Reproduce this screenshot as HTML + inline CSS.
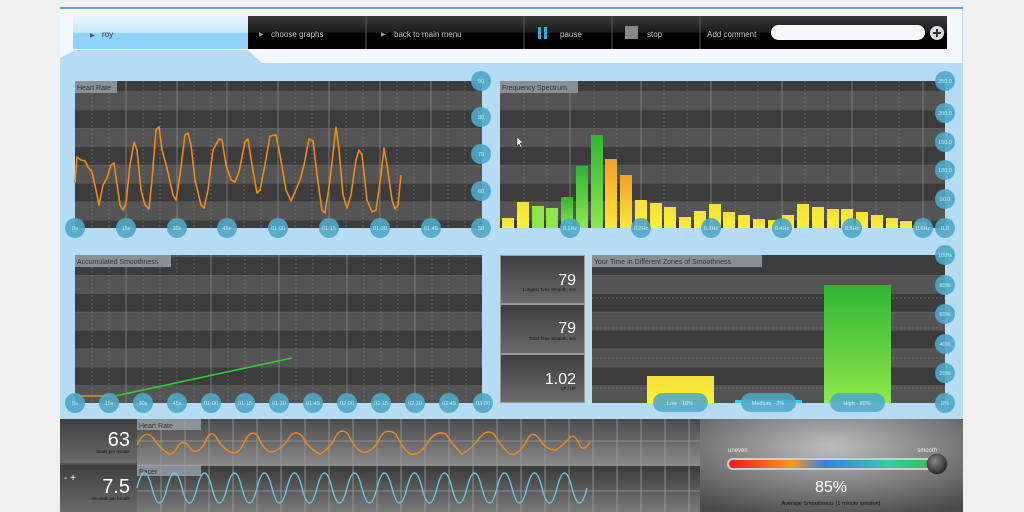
<!DOCTYPE html>
<html><head><meta charset="utf-8"><style>
html,body{margin:0;padding:0;width:1024px;height:512px;overflow:hidden;background:#f0f0f0}
svg{display:block;font-family:"Liberation Sans",sans-serif}
</style></head><body>
<svg width="1024" height="512" viewBox="0 0 1024 512" xmlns="http://www.w3.org/2000/svg">
<defs>
<linearGradient id="tab" x1="0" y1="0" x2="0" y2="1"><stop offset="0" stop-color="#e8f5fd"/><stop offset="0.5" stop-color="#c8e9fb"/><stop offset="0.52" stop-color="#8fd3fb"/><stop offset="1" stop-color="#8fd3fb"/></linearGradient>
<linearGradient id="nav" x1="0" y1="0" x2="0" y2="1"><stop offset="0" stop-color="#3a3a3a"/><stop offset="0.5" stop-color="#1a1a1a"/><stop offset="0.52" stop-color="#000"/><stop offset="1" stop-color="#000"/></linearGradient>
<linearGradient id="yel" x1="0" y1="0" x2="0" y2="1"><stop offset="0" stop-color="#f5e03a"/><stop offset="1" stop-color="#fff238"/></linearGradient>
<linearGradient id="grn" x1="0" y1="0" x2="0" y2="1"><stop offset="0" stop-color="#2db534"/><stop offset="1" stop-color="#8ee84a"/></linearGradient>
<linearGradient id="org" x1="0" y1="0" x2="0" y2="1"><stop offset="0" stop-color="#f0a028"/><stop offset="1" stop-color="#fde838"/></linearGradient>
<linearGradient id="stat" x1="0" y1="0" x2="0" y2="1"><stop offset="0" stop-color="#3e3e3e"/><stop offset="1" stop-color="#6a6a6a"/></linearGradient>
<linearGradient id="bot" x1="0" y1="0" x2="0" y2="1"><stop offset="0" stop-color="#4a4a4a"/><stop offset="0.5" stop-color="#8a8a8a"/><stop offset="0.51" stop-color="#3a3a3a"/><stop offset="1" stop-color="#7a7a7a"/></linearGradient>
<radialGradient id="smp" cx="0.5" cy="0.3" r="0.8"><stop offset="0" stop-color="#bdbdbd"/><stop offset="1" stop-color="#4a4a4a"/></radialGradient>
<linearGradient id="rain" x1="0" y1="0" x2="1" y2="0"><stop offset="0" stop-color="#f01818"/><stop offset="0.3" stop-color="#f59a20"/><stop offset="0.45" stop-color="#3a7fe0"/><stop offset="0.75" stop-color="#3ac8a8"/><stop offset="1" stop-color="#30c040"/></linearGradient>
<radialGradient id="knob" cx="0.4" cy="0.35" r="0.7"><stop offset="0" stop-color="#888"/><stop offset="1" stop-color="#222"/></radialGradient>
<pattern id="bands" x="0" y="0" width="10" height="36.75" patternUnits="userSpaceOnUse"><rect width="10" height="18" fill="#3c3c3c"/><rect y="18" width="10" height="18.75" fill="#545454"/></pattern>
</defs>

<!-- app bg -->
<rect x="60" y="7" width="903" height="505" fill="#b5dcf3"/>
<rect x="60" y="7" width="903" height="2" fill="#6a9ee8"/>
<polygon points="60,9 962,9 962,63 262,63 248,50 75,50 60,58" fill="#f3f9fd"/>
<rect x="73" y="16" width="175" height="33" fill="url(#tab)"/>
<text x="90" y="37" font-size="6" fill="#555">▶</text>
<text x="102" y="37" font-size="8" fill="#333">roy</text>
<rect x="248" y="16" width="699" height="33" fill="url(#nav)"/>
<g stroke="#555" stroke-width="1"><line x1="366" y1="16" x2="366" y2="49"/><line x1="524" y1="16" x2="524" y2="49"/><line x1="612" y1="16" x2="612" y2="49"/><line x1="700" y1="16" x2="700" y2="49"/></g>
<g font-size="8" fill="#ccc">
<text x="259" y="36" font-size="6" fill="#999">▶</text><text x="271" y="37">choose graphs</text>
<text x="381" y="36" font-size="6" fill="#999">▶</text><text x="394" y="37">back to main menu</text>
<text x="560" y="37">pause</text><text x="647" y="37">stop</text><text x="707" y="37">Add comment</text>
</g>
<rect x="538" y="27" width="3" height="12" fill="#1fb4d8"/><rect x="544" y="27" width="3" height="12" fill="#1fb4d8"/>
<rect x="625" y="26" width="13" height="13" fill="#888"/>
<rect x="771" y="25" width="154" height="15" rx="7.5" fill="#f4f8fb"/>
<circle cx="937" cy="33" r="7" fill="#ddd"/><path d="M933,33h8M937,29v8" stroke="#333" stroke-width="2"/>

<!-- Heart rate chart -->
<g>
<rect x="75" y="81" width="407" height="147" fill="url(#bands)"/>
<g stroke="#777" stroke-width="0.7" stroke-dasharray="2,2">
<line x1="92" y1="81" x2="92" y2="228"/><line x1="109" y1="81" x2="109" y2="228"/><line x1="143" y1="81" x2="143" y2="228"/><line x1="160" y1="81" x2="160" y2="228"/><line x1="194" y1="81" x2="194" y2="228"/><line x1="211" y1="81" x2="211" y2="228"/><line x1="244" y1="81" x2="244" y2="228"/><line x1="261" y1="81" x2="261" y2="228"/><line x1="295" y1="81" x2="295" y2="228"/><line x1="312" y1="81" x2="312" y2="228"/><line x1="346" y1="81" x2="346" y2="228"/><line x1="363" y1="81" x2="363" y2="228"/><line x1="397" y1="81" x2="397" y2="228"/><line x1="414" y1="81" x2="414" y2="228"/><line x1="448" y1="81" x2="448" y2="228"/><line x1="465" y1="81" x2="465" y2="228"/>
</g>
<g stroke="#888" stroke-width="0.8"><line x1="126" y1="81" x2="126" y2="228"/><line x1="177" y1="81" x2="177" y2="228"/><line x1="227" y1="81" x2="227" y2="228"/><line x1="278" y1="81" x2="278" y2="228"/><line x1="329" y1="81" x2="329" y2="228"/><line x1="380" y1="81" x2="380" y2="228"/><line x1="431" y1="81" x2="431" y2="228"/></g>
<rect x="75" y="81" width="42" height="12" fill="#8a8f93"/><text x="77" y="90" font-size="7" fill="#333">Heart Rate</text>
<path d="M75,183 L77,157 L81,160 L85,161 L88,167 L92,172 L96,190 L99,205 L103,185 L107,178 L111,165 L114,163 L116,177 L120,205 L123,210 L126,203 L130,165 L134,142 L137,150 L141,190 L145,205 L149,209 L152,180 L156,130 L159,127 L162,150 L167,168 L173,195 L176,200 L180,175 L185,135 L188,133 L191,145 L195,180 L201,205 L204,208 L208,190 L213,150 L219,139 L222,140 L226,165 L231,180 L235,182 L239,172 L245,142 L248,139 L252,165 L257,193 L260,190 L265,165 L270,136 L276,135 L280,155 L286,190 L291,201 L295,192 L300,180 L304,165 L309,139 L313,141 L317,175 L322,210 L325,213 L330,180 L336,127 L339,150 L343,195 L347,208 L351,195 L356,160 L359,150 L362,155 L367,200 L372,212 L376,210 L381,175 L384,148 L387,165 L392,200 L395,209 L398,205 L401,175" fill="none" stroke="#f08a14" stroke-width="1.6" stroke-linejoin="round"/>
</g>

<!-- Freq chart -->
<g>
<rect x="500" y="81" width="445" height="147" fill="url(#bands)"/>
<g stroke="#777" stroke-width="0.7" stroke-dasharray="2,2">
<line x1="524" y1="81" x2="524" y2="228"/><line x1="547" y1="81" x2="547" y2="228"/><line x1="594" y1="81" x2="594" y2="228"/><line x1="617" y1="81" x2="617" y2="228"/><line x1="664" y1="81" x2="664" y2="228"/><line x1="687" y1="81" x2="687" y2="228"/><line x1="735" y1="81" x2="735" y2="228"/><line x1="758" y1="81" x2="758" y2="228"/><line x1="805" y1="81" x2="805" y2="228"/><line x1="828" y1="81" x2="828" y2="228"/><line x1="876" y1="81" x2="876" y2="228"/><line x1="899" y1="81" x2="899" y2="228"/>
</g>
<g stroke="#888" stroke-width="0.8"><line x1="570" y1="81" x2="570" y2="228"/><line x1="641" y1="81" x2="641" y2="228"/><line x1="711" y1="81" x2="711" y2="228"/><line x1="782" y1="81" x2="782" y2="228"/><line x1="852" y1="81" x2="852" y2="228"/><line x1="923" y1="81" x2="923" y2="228"/></g>
<rect x="500" y="81" width="78" height="12" fill="#8a8f93"/><text x="502" y="90" font-size="7" fill="#333">Frequency Spectrum</text>
<g>
<rect x="502" y="218" width="12" height="10" fill="url(#yel)"/>
<rect x="517" y="202" width="12" height="26" fill="url(#yel)"/>
<rect x="532" y="206" width="12" height="22" fill="#8ee84a"/>
<rect x="546" y="208" width="12" height="20" fill="#8ee84a"/>
<rect x="561" y="197" width="12" height="31" fill="url(#grn)"/>
<rect x="576" y="166" width="12" height="62" fill="url(#grn)"/>
<rect x="591" y="135" width="12" height="93" fill="url(#grn)"/>
<rect x="605" y="159" width="12" height="69" fill="url(#org)"/>
<rect x="620" y="175" width="12" height="53" fill="url(#org)"/>
<rect x="635" y="200" width="12" height="28" fill="url(#yel)"/>
<rect x="650" y="203" width="12" height="25" fill="url(#yel)"/>
<rect x="664" y="207" width="12" height="21" fill="url(#yel)"/>
<rect x="679" y="217" width="12" height="11" fill="url(#yel)"/>
<rect x="694" y="211" width="12" height="17" fill="url(#yel)"/>
<rect x="709" y="204" width="12" height="24" fill="url(#yel)"/>
<rect x="723" y="212" width="12" height="16" fill="url(#yel)"/>
<rect x="738" y="215" width="12" height="13" fill="url(#yel)"/>
<rect x="753" y="219" width="12" height="9" fill="url(#yel)"/>
<rect x="768" y="220" width="12" height="8" fill="url(#yel)"/>
<rect x="782" y="215" width="12" height="13" fill="url(#yel)"/>
<rect x="797" y="204" width="12" height="24" fill="url(#yel)"/>
<rect x="812" y="207" width="12" height="21" fill="url(#yel)"/>
<rect x="827" y="209" width="12" height="19" fill="url(#yel)"/>
<rect x="841" y="209" width="12" height="19" fill="url(#yel)"/>
<rect x="856" y="212" width="12" height="16" fill="url(#yel)"/>
<rect x="871" y="215" width="12" height="13" fill="url(#yel)"/>
<rect x="886" y="218" width="12" height="10" fill="url(#yel)"/>
<rect x="900" y="221" width="12" height="7" fill="url(#yel)"/>
<rect x="915" y="222" width="12" height="6" fill="url(#yel)"/>
</g>
<path d="M517,137 l0,9 l2,-2 l2,4 l1,-1 l-2,-4 l3,0 z" fill="#fff" stroke="#000" stroke-width="0.4"/>
</g>

<!-- Accumulated -->
<g>
<rect x="75" y="255" width="407" height="148" fill="url(#bands)"/>
<g stroke="#777" stroke-width="0.7" stroke-dasharray="2,2">
<line x1="92" y1="255" x2="92" y2="403"/><line x1="109" y1="255" x2="109" y2="403"/><line x1="143" y1="255" x2="143" y2="403"/><line x1="160" y1="255" x2="160" y2="403"/><line x1="177" y1="255" x2="177" y2="403"/><line x1="194" y1="255" x2="194" y2="403"/><line x1="228" y1="255" x2="228" y2="403"/><line x1="245" y1="255" x2="245" y2="403"/><line x1="262" y1="255" x2="262" y2="403"/><line x1="296" y1="255" x2="296" y2="403"/><line x1="313" y1="255" x2="313" y2="403"/><line x1="330" y1="255" x2="330" y2="403"/><line x1="364" y1="255" x2="364" y2="403"/><line x1="381" y1="255" x2="381" y2="403"/><line x1="398" y1="255" x2="398" y2="403"/><line x1="432" y1="255" x2="432" y2="403"/><line x1="449" y1="255" x2="449" y2="403"/><line x1="466" y1="255" x2="466" y2="403"/>
</g>
<g stroke="#888" stroke-width="0.8"><line x1="126" y1="255" x2="126" y2="403"/><line x1="211" y1="255" x2="211" y2="403"/><line x1="279" y1="255" x2="279" y2="403"/><line x1="347" y1="255" x2="347" y2="403"/><line x1="415" y1="255" x2="415" y2="403"/></g>
<rect x="75" y="255" width="96" height="12" fill="#8a8f93"/><text x="77" y="264" font-size="7" fill="#333">Accumulated Smoothness</text>
<line x1="77" y1="396" x2="112" y2="396" stroke="#f08a14" stroke-width="1.6"/>
<line x1="115" y1="396" x2="292" y2="358" stroke="#2bd02b" stroke-width="1.6"/>
</g>

<!-- Stats -->
<g>
<rect x="500" y="255" width="85" height="148" fill="#999"/>
<rect x="501" y="256" width="83" height="47" fill="url(#stat)"/>
<rect x="501" y="305" width="83" height="48" fill="url(#stat)"/>
<rect x="501" y="355" width="83" height="47" fill="url(#stat)"/>
<g fill="#fff" font-size="16" text-anchor="end"><text x="576" y="285">79</text><text x="576" y="333">79</text><text x="576" y="384">1.02</text></g>
<g fill="#111" font-size="4.5" text-anchor="end"><text x="576" y="291">Longest Time Smooth, sec</text><text x="576" y="340">Total Time Smooth, sec</text><text x="576" y="390">LF / HF</text></g>
</g>

<!-- Zones -->
<g>
<rect x="592" y="255" width="353" height="148" fill="url(#bands)"/>
<rect x="592" y="255" width="353" height="14" fill="#3c3c3c"/>
<g stroke="#777" stroke-width="0.7" stroke-dasharray="2,2"><line x1="592" y1="298" x2="945" y2="298"/><line x1="592" y1="328" x2="945" y2="328"/><line x1="592" y1="358" x2="945" y2="358"/><line x1="592" y1="388" x2="945" y2="388"/></g>
<rect x="592" y="255" width="170" height="12" fill="#8a8f93"/><text x="594" y="264" font-size="7" fill="#333">Your Time in Different Zones of Smoothness</text>
<rect x="647" y="376" width="67" height="27" fill="url(#yel)"/>
<rect x="735" y="400" width="67" height="3" fill="#2bd8f0"/>
<rect x="824" y="285" width="67" height="118" fill="url(#grn)"/>
<g fill="#4ea9c8" opacity="0.85"><rect x="653" y="393" width="55" height="19" rx="9.5"/><rect x="741" y="393" width="55" height="19" rx="9.5"/><rect x="830" y="393" width="55" height="19" rx="9.5"/></g>
<g fill="#d8eef6" font-size="5.5" text-anchor="middle"><text x="680" y="405">Low - 18%</text><text x="768" y="405">Medium - 2%</text><text x="857" y="405">High - 80%</text></g>
</g>

<!-- Axis circles -->
<g fill="#4ea9c8" opacity="0.9">
<circle cx="481" cy="81" r="10"/><circle cx="481" cy="117" r="10"/><circle cx="481" cy="154" r="10"/><circle cx="481" cy="191" r="10"/><circle cx="481" cy="228" r="10"/>
<circle cx="75" cy="228" r="10"/><circle cx="126" cy="228" r="10"/><circle cx="177" cy="228" r="10"/><circle cx="227" cy="228" r="10"/><circle cx="278" cy="228" r="10"/><circle cx="329" cy="228" r="10"/><circle cx="380" cy="228" r="10"/><circle cx="431" cy="228" r="10"/>
<circle cx="945" cy="81" r="10"/><circle cx="945" cy="113" r="10"/><circle cx="945" cy="142" r="10"/><circle cx="945" cy="170" r="10"/><circle cx="945" cy="199" r="10"/><circle cx="945" cy="228" r="10"/>
<circle cx="570" cy="228" r="10"/><circle cx="641" cy="228" r="10"/><circle cx="711" cy="228" r="10"/><circle cx="782" cy="228" r="10"/><circle cx="852" cy="228" r="10"/><circle cx="923" cy="228" r="10"/>
<circle cx="75" cy="403" r="10"/><circle cx="109" cy="403" r="10"/><circle cx="143" cy="403" r="10"/><circle cx="177" cy="403" r="10"/><circle cx="211" cy="403" r="10"/><circle cx="245" cy="403" r="10"/><circle cx="279" cy="403" r="10"/><circle cx="313" cy="403" r="10"/><circle cx="347" cy="403" r="10"/><circle cx="381" cy="403" r="10"/><circle cx="415" cy="403" r="10"/><circle cx="449" cy="403" r="10"/><circle cx="483" cy="403" r="10"/>
<circle cx="945" cy="255" r="10"/><circle cx="945" cy="285" r="10"/><circle cx="945" cy="314" r="10"/><circle cx="945" cy="344" r="10"/><circle cx="945" cy="373" r="10"/><circle cx="945" cy="403" r="10"/>
</g>
<g fill="#d0e8f2" font-size="5.5" text-anchor="middle">
<text x="481" y="83">90</text><text x="481" y="119">80</text><text x="481" y="156">70</text><text x="481" y="193">60</text><text x="481" y="230">50</text>
<text x="75" y="230">0s</text><text x="126" y="230">15s</text><text x="177" y="230">30s</text><text x="227" y="230">45s</text><text x="278" y="230">01:00</text><text x="329" y="230">01:15</text><text x="380" y="230">01:30</text><text x="431" y="230">01:45</text>
<text x="945" y="83">250.0</text><text x="945" y="115">200.0</text><text x="945" y="144">150.0</text><text x="945" y="172">100.0</text><text x="945" y="201">50.0</text><text x="945" y="230">0.0</text>
<text x="570" y="230">0.1Hz</text><text x="641" y="230">0.2Hz</text><text x="711" y="230">0.3Hz</text><text x="782" y="230">0.4Hz</text><text x="852" y="230">0.5Hz</text><text x="923" y="230">0.6Hz</text>
<text x="75" y="405">0s</text><text x="109" y="405">15s</text><text x="143" y="405">30s</text><text x="177" y="405">45s</text><text x="211" y="405">01:00</text><text x="245" y="405">01:15</text><text x="279" y="405">01:30</text><text x="313" y="405">01:45</text><text x="347" y="405">02:00</text><text x="381" y="405">02:15</text><text x="415" y="405">02:30</text><text x="449" y="405">02:45</text><text x="483" y="405">03:00</text>
<text x="945" y="257">100%</text><text x="945" y="287">80%</text><text x="945" y="316">60%</text><text x="945" y="346">40%</text><text x="945" y="375">20%</text><text x="945" y="405">0%</text>
</g>

<!-- Bottom -->
<rect x="60" y="419" width="903" height="93" fill="#555"/>
<rect x="60" y="419" width="77" height="44" fill="url(#stat)"/>
<rect x="60" y="465" width="77" height="47" fill="url(#stat)"/>
<rect x="137" y="419" width="563" height="93" fill="url(#bot)"/>
<g stroke="#9a9a9a" stroke-width="0.8">
<line x1="161" y1="419" x2="161" y2="512"/><line x1="185" y1="419" x2="185" y2="512"/><line x1="209" y1="419" x2="209" y2="512"/><line x1="233" y1="419" x2="233" y2="512"/><line x1="257" y1="419" x2="257" y2="512"/><line x1="281" y1="419" x2="281" y2="512"/><line x1="305" y1="419" x2="305" y2="512"/><line x1="329" y1="419" x2="329" y2="512"/><line x1="353" y1="419" x2="353" y2="512"/><line x1="377" y1="419" x2="377" y2="512"/><line x1="401" y1="419" x2="401" y2="512"/><line x1="425" y1="419" x2="425" y2="512"/><line x1="449" y1="419" x2="449" y2="512"/><line x1="473" y1="419" x2="473" y2="512"/><line x1="497" y1="419" x2="497" y2="512"/><line x1="521" y1="419" x2="521" y2="512"/><line x1="545" y1="419" x2="545" y2="512"/><line x1="569" y1="419" x2="569" y2="512"/><line x1="593" y1="419" x2="593" y2="512"/><line x1="617" y1="419" x2="617" y2="512"/><line x1="641" y1="419" x2="641" y2="512"/><line x1="665" y1="419" x2="665" y2="512"/><line x1="689" y1="419" x2="689" y2="512"/>
<line x1="137" y1="441" x2="700" y2="441"/><line x1="137" y1="465" x2="700" y2="465"/><line x1="137" y1="491" x2="700" y2="491"/>
</g>
<rect x="137" y="419" width="64" height="11" fill="#9aa5ad" opacity="0.8"/><text x="139" y="428" font-size="7" fill="#333">Heart Rate</text>
<rect x="137" y="465" width="64" height="11" fill="#9aa5ad" opacity="0.8"/><text x="139" y="474" font-size="7" fill="#333">Pacer</text>
<g fill="#fff" text-anchor="end"><text x="130" y="446" font-size="20">63</text><text x="130" y="493" font-size="20">7.5</text></g>
<g fill="#111" font-size="4.5" text-anchor="end"><text x="130" y="453">beats per minute</text><text x="130" y="500">seconds per breath</text></g>
<text x="64" y="481" font-size="10" fill="#fff">- +</text>
<path d="M137,445 Q145,428 153,438 Q160,448 166,452 Q172,458 178,446 Q184,438 190,448 Q196,456 204,445 Q210,428 216,437 Q222,448 230,452 Q238,456 244,443 Q250,428 258,436 Q264,452 272,452 Q280,450 288,440 Q294,428 302,436 Q308,448 320,454 Q328,450 334,440 Q340,426 348,434 Q354,448 362,452 Q370,454 378,442 Q384,426 396,434 Q402,448 410,454 Q420,456 428,442 Q436,430 446,434 Q452,444 462,454 Q470,450 478,440 Q486,428 494,434 Q502,448 510,454 Q518,456 526,442 Q532,428 540,440 Q546,450 556,450 Q562,446 568,440 Q574,430 580,446 Q584,452 590,442" fill="none" stroke="#f08a14" stroke-width="1.4"/>
<path d="M137,488 Q144.5,458 152,488 T167,488 T182,488 T197,488 T212,488 T227,488 T242,488 T257,488 T272,488 T287,488 T302,488 T317,488 T332,488 T347,488 T362,488 T377,488 T392,488 T407,488 T422,488 T437,488 T452,488 T467,488 T482,488 T497,488 T512,488 T527,488 T542,488 T557,488 T572,488 T587,488" fill="none" stroke="#6cc4e4" stroke-width="1.4"/>
<rect x="700" y="419" width="263" height="93" fill="url(#smp)"/>
<text x="728" y="452" font-size="6" fill="#eee">uneven</text>
<text x="937" y="452" font-size="6" fill="#eee" text-anchor="end">smooth</text>
<rect x="727" y="458" width="216" height="12" rx="6" fill="#ccc"/>
<rect x="729" y="460" width="212" height="8" rx="4" fill="url(#rain)"/>
<circle cx="937" cy="464" r="10" fill="url(#knob)" stroke="#333" stroke-width="0.5"/>
<text x="831" y="492" font-size="16" fill="#fff" text-anchor="middle">85%</text>
<text x="831" y="505" font-size="5.5" fill="#111" text-anchor="middle">Average Smoothness (1 minute session)</text>
</svg>
</body></html>
